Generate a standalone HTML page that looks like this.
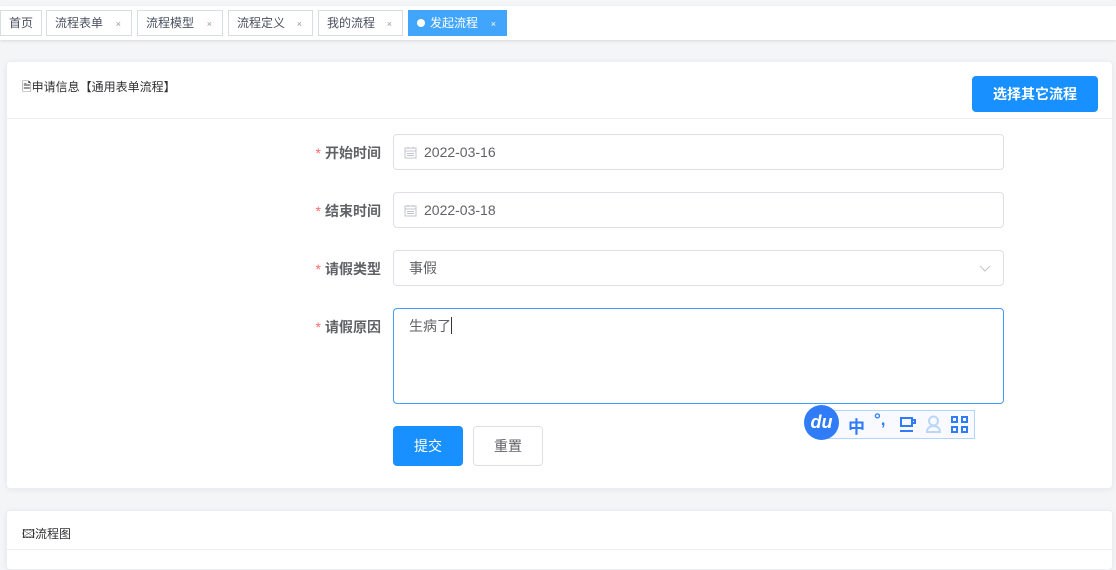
<!DOCTYPE html>
<html><head><meta charset="utf-8"><style>
*{box-sizing:border-box;margin:0;padding:0}
body{width:1116px;height:564px;overflow:hidden;background:#f4f5f7;font-family:"Liberation Sans","Noto Sans CJK SC",sans-serif;position:relative;font-size:13px;color:#606266}
.top{position:absolute;left:0;top:6px;width:1116px;height:34px;background:#fff;box-shadow:0 1px 3px rgba(0,0,0,.12)}
.tab{position:absolute;top:10px;height:26px;border:1px solid #d8dce5;background:#fff;font-size:12px;color:#495060;line-height:24px;padding-left:8px}
.tab .x{position:absolute;right:10px;top:1px;font-size:9px;color:#999}
.card{position:absolute;left:6px;width:1107px;background:#fff;border:1px solid #ebeef5;border-radius:4px;box-shadow:0 1px 6px rgba(0,0,0,.06)}
.lab{position:absolute;width:100px;text-align:right;font-weight:bold;color:#606266;font-size:14px;left:281px}
.lab b{color:#f56c6c;font-weight:normal;margin-right:4px}
.inp{position:absolute;left:393px;width:611px;border:1px solid #dcdfe6;border-radius:4px;font-size:14px;color:#606266;height:36px;line-height:34px}
.ime{position:absolute;top:414px;color:#2f7cf6;font-weight:bold}
</style></head><body>
<div class="top"></div>
<div class="tab" style="left:0;width:42px">首页</div>
<div class="tab" style="left:46px;width:86px">流程表单<span class="x">×</span></div>
<div class="tab" style="left:137px;width:86px">流程模型<span class="x">×</span></div>
<div class="tab" style="left:228px;width:85px">流程定义<span class="x">×</span></div>
<div class="tab" style="left:318px;width:85px">我的流程<span class="x">×</span></div>
<div class="tab" style="left:408px;width:99px;background:#42a5fc;border-color:#42a5fc;color:#fff"><span style="display:inline-block;width:8px;height:8px;border-radius:50%;background:#fff;margin-right:5px"></span>发起流程<span class="x" style="color:#fff">×</span></div>

<div class="card" style="top:61px;height:428px">
 <div style="position:absolute;left:15px;top:16px;font-size:12px;color:#303133">🗎申请信息【通用表单流程】</div>
 <div style="position:absolute;right:14px;top:14px;width:126px;height:36px;background:#1890ff;border-radius:4px;color:#fff;font-size:14px;font-weight:bold;text-align:center;line-height:36px">选择其它流程</div>
 <div style="position:absolute;left:0;right:0;top:56px;border-top:1px solid #ebeef5"></div>
</div>
<div class="lab" style="top:143px"><b>*</b>开始时间</div>
<div class="inp" style="top:134px;padding-left:30px"><svg style="position:absolute;left:10px;top:11px" width="13" height="13" viewBox="0 0 13 13" fill="none" stroke="#c0c4cc"><rect x="1" y="2" width="11" height="10"/><path d="M1 5h11M3 7.5h7M3 9.5h7M4 1v2M9 1v2"/></svg>2022-03-16</div>
<div class="lab" style="top:201px"><b>*</b>结束时间</div>
<div class="inp" style="top:192px;padding-left:30px"><svg style="position:absolute;left:10px;top:11px" width="13" height="13" viewBox="0 0 13 13" fill="none" stroke="#c0c4cc"><rect x="1" y="2" width="11" height="10"/><path d="M1 5h11M3 7.5h7M3 9.5h7M4 1v2M9 1v2"/></svg>2022-03-18</div>
<div class="lab" style="top:259px"><b>*</b>请假类型</div>
<div class="inp" style="top:250px;padding-left:15px">事假<svg style="position:absolute;right:12px;top:14px" width="12" height="7" viewBox="0 0 12 7" fill="none" stroke="#c0c4cc"><path d="M1 1l5 5 5-5"/></svg></div>
<div class="lab" style="top:317px"><b>*</b>请假原因</div>
<div class="inp" style="top:308px;height:96px;border-color:#409eff;padding-left:15px;line-height:34px">生病了<span style="display:inline-block;width:1px;height:17px;background:#333;vertical-align:-3px"></span></div>
<div style="position:absolute;left:393px;top:426px;width:70px;height:40px;background:#1890ff;border-radius:4px;color:#fff;font-size:14px;text-align:center;line-height:40px">提交</div>
<div style="position:absolute;left:473px;top:426px;width:70px;height:40px;border:1px solid #dcdfe6;border-radius:4px;color:#606266;font-size:14px;text-align:center;line-height:38px">重置</div>
<div style="position:absolute;left:820px;top:410px;width:155px;height:29px;border:1px solid #b3d4fc;background:#f8faff"></div>
<div class="ime" style="left:848px;font-size:17px;top:413px">中</div>
<div class="ime" style="left:874px;font-size:17px;top:410px">°,</div>
<svg style="position:absolute;left:899px;top:416px" width="18" height="17" viewBox="0 0 18 17" fill="none" stroke="#2f7cf6" stroke-width="2"><path d="M2 2h11v8H2zM13 4h3v3h-3M1 15h13"/></svg>
<svg style="position:absolute;left:925px;top:415px" width="17" height="18" viewBox="0 0 17 18" fill="none" stroke="#bcd6fa" stroke-width="2"><circle cx="8.5" cy="6" r="4.5"/><path d="M2 17c0-4 3-6 6.5-6s6.5 2 6.5 6z"/></svg>
<svg style="position:absolute;left:951px;top:416px" width="17" height="17" viewBox="0 0 17 17" fill="none" stroke="#2f7cf6" stroke-width="2"><rect x="1" y="1" width="5" height="5"/><rect x="11" y="1" width="5" height="5"/><rect x="1" y="11" width="5" height="5"/><rect x="11" y="11" width="5" height="5"/></svg>
<div style="position:absolute;left:804px;top:405px;width:35px;height:35px;border-radius:50%;background:#2f7cf6;color:#fff;font-style:italic;font-weight:bold;font-size:18px;text-align:center;line-height:34px">du</div>

<div class="card" style="top:510px;height:60px">
 <div style="position:absolute;left:15px;top:14px;font-size:12px;color:#303133">🖾流程图</div>
 <div style="position:absolute;left:0;right:0;top:38px;border-top:1px solid #ebeef5"></div>
</div>
</body></html>
